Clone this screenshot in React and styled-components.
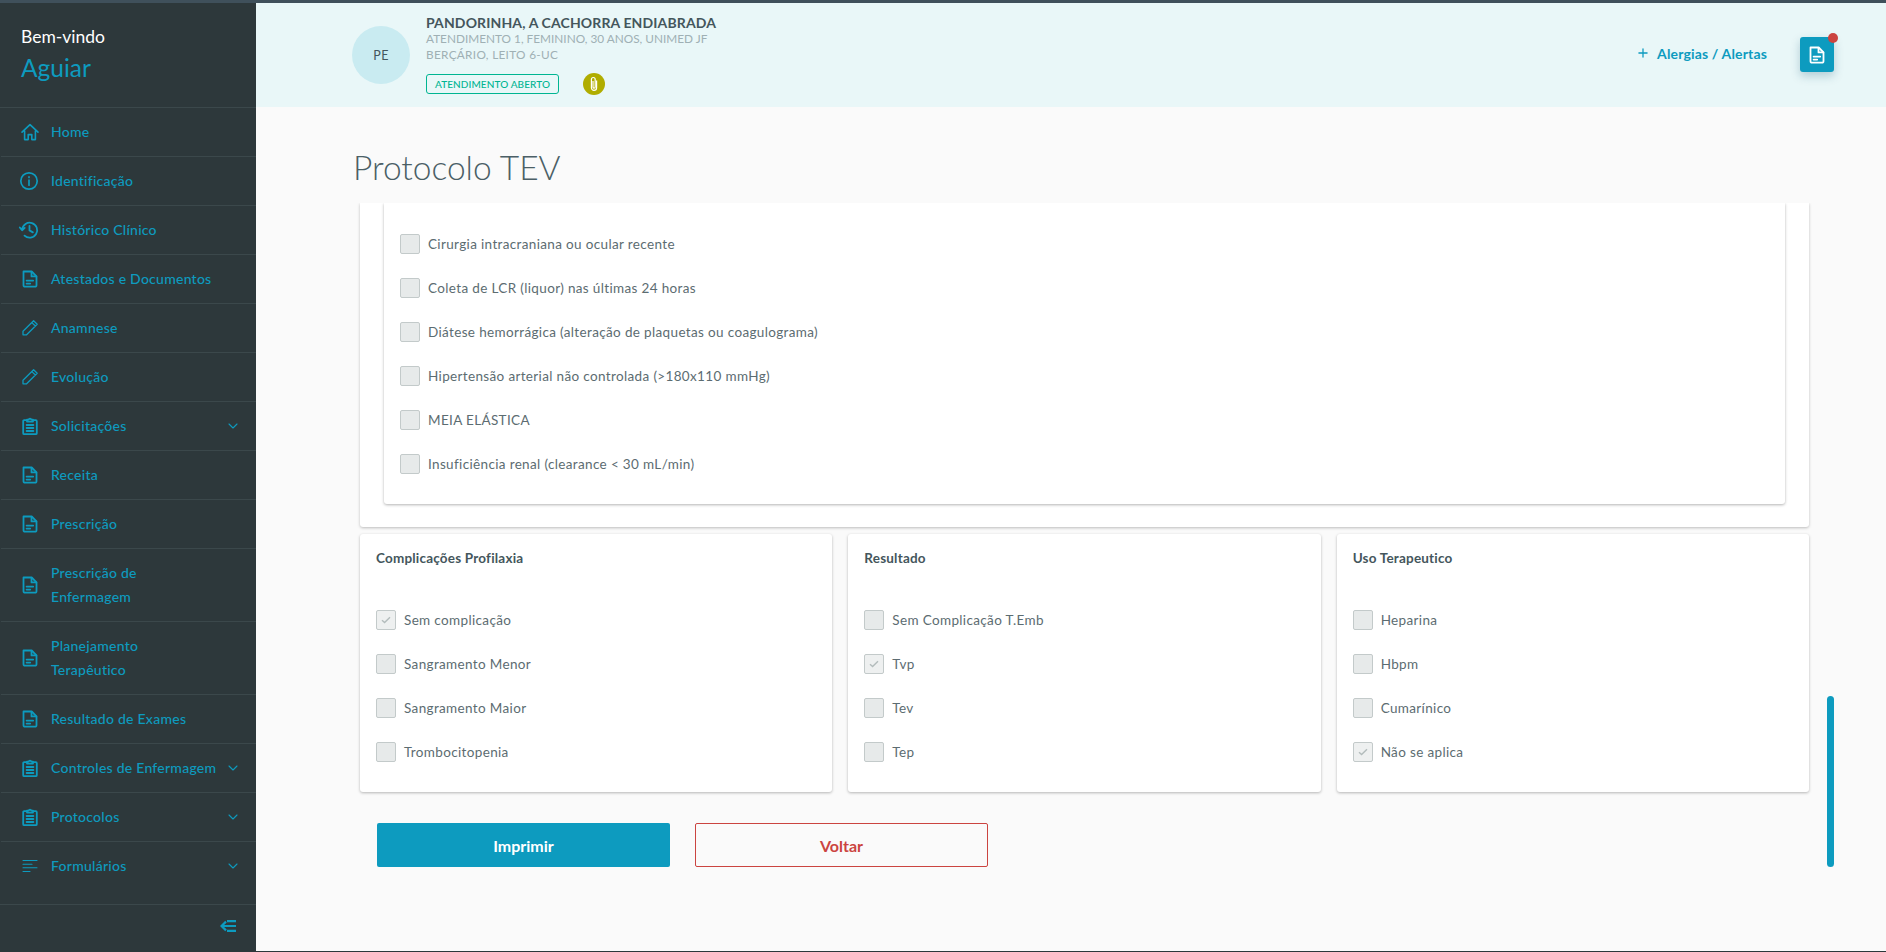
import React from 'react'
import styled, { createGlobalStyle } from 'styled-components'
import { ChevronDown, Plus } from 'lucide-react'

const BLUE = '#0d9bbf'
const DARK = '#2d383b'
const INK = '#44565c'

const GlobalStyle = createGlobalStyle`
  * { box-sizing: border-box; }
  html, body { margin: 0; height: 100%; }
  body { font-family: Lato, "Open Sans", sans-serif; background: #fafafa; overflow: hidden; }
`

const Page = styled.div`
  display: flex;
  flex-direction: column;
  height: 952px;
  border-top: 3px solid #3f505b;
  border-bottom: 1px solid ${DARK};
`

const Body = styled.div`
  display: flex;
  flex: 1;
  min-height: 0;
  position: relative;
`

const Sidebar = styled.aside`
  background: ${DARK};
  display: flex;
  flex: 0 0 256px;
  flex-direction: column;
  margin-bottom: -1px;
`

const Welcome = styled.div`
  border-bottom: 1px solid #3b484b;
  height: 105px;
  padding: 22px 0 0 21px;
`

const Hello = styled.div`
  color: #fff;
  font-size: 17.5px;
  line-height: 24px;
`

const UserName = styled.div`
  color: ${BLUE};
  font-size: 24.5px;
  line-height: 34px;
  margin-top: 2px;
`

const Nav = styled.nav`
  flex: 1;
`

const NavItem = styled.a`
  align-items: center;
  border-bottom: ${props => (props.$last ? 'none' : '1px solid #3b484b')};
  color: ${BLUE};
  display: flex;
  font-size: 14px;
  font-weight: 500;
  letter-spacing: 0.25px;
  line-height: 24px;
  margin-left: 1px;
  padding: 12px 15px 12px 20px;
`

const NavIcon = styled.span`
  display: flex;
  flex: 0 0 30px;
`

const NavLabel = styled.span`
  flex: 1;
  max-width: ${props => (props.$narrow ? '110px' : 'none')};
`

const SidebarFoot = styled.div`
  align-items: center;
  border-top: 1px solid #3b484b;
  display: flex;
  height: 48px;
  justify-content: flex-end;
  padding: 0 20px 6px 0;
`

const Main = styled.main`
  display: flex;
  flex: 1;
  flex-direction: column;
  min-width: 0;
`

const PatientBar = styled.header`
  align-items: center;
  background: #e9f7f8;
  display: flex;
  flex: 0 0 104px;
  padding: 0 52px 0 96px;
`

const Avatar = styled.div`
  align-items: center;
  background: #c9ebf1;
  border-radius: 50%;
  color: ${INK};
  display: flex;
  font-size: 12.5px;
  height: 58px;
  justify-content: center;
  letter-spacing: 0.4px;
  width: 58px;
`

const Patient = styled.div`
  flex: 1;
  margin-left: 16px;
`

const PatientName = styled.div`
  color: ${INK};
  font-size: 14px;
  font-weight: 700;
  letter-spacing: 0.13px;
  line-height: 16px;
`

const PatientLine = styled.div`
  color: #9fb0b4;
  font-size: 11.8px;
  letter-spacing: ${props => (props.$wide ? '0.3px' : '0')};
  line-height: 16px;
`

const Status = styled.div`
  align-items: center;
  display: flex;
  gap: 24px;
  margin-top: 10px;
`

const Badge = styled.span`
  border: 1px solid #00b592;
  border-radius: 3px;
  color: #00b592;
  font-size: 10px;
  font-weight: 500;
  height: 20px;
  letter-spacing: 0.1px;
  line-height: 18px;
  text-align: center;
  width: 133px;
`

const ClipDot = styled.span`
  align-items: center;
  background: #b0ad00;
  border-radius: 50%;
  display: flex;
  height: 22px;
  justify-content: center;
  width: 22px;
`

const AlertLink = styled.a`
  align-items: center;
  color: ${BLUE};
  display: flex;
  font-size: 14px;
  font-weight: 700;
  gap: 7px;
  letter-spacing: 0.15px;
  margin: 0 33px 4px 0;
`

const DocButton = styled.button`
  align-items: center;
  background: ${BLUE};
  border: 0;
  border-radius: 3px;
  box-shadow: 0 4px 10px rgba(13, 80, 110, 0.25);
  display: flex;
  height: 35px;
  justify-content: center;
  margin-bottom: 1px;
  padding: 0;
  position: relative;
  width: 34px;
`

const RedDot = styled.span`
  background: #cb4440;
  border-radius: 50%;
  height: 10px;
  position: absolute;
  right: -4px;
  top: -4px;
  width: 10px;
`

const Title = styled.h1`
  color: #4b5f66;
  flex: 0 0 96px;
  font-size: 33.5px;
  font-weight: 300;
  line-height: 40px;
  margin: 0;
  padding: 40px 0 0 97px;
`

const Content = styled.div`
  flex: 1;
  min-height: 0;
  overflow: hidden;
  padding: 0 77px 0 104px;
`

const OuterCard = styled.section`
  background: #fff;
  border-radius: 0 0 3px 3px;
  box-shadow: 0 1px 3px rgba(0, 0, 0, 0.25);
  padding: 0 24px 23px 24px;
`

const InnerCard = styled.div`
  background: #fff;
  border-radius: 0 0 3px 3px;
  box-shadow: 0 1px 3px rgba(0, 0, 0, 0.3);
  padding: 31px 16px 30px;
`

const Cards = styled.div`
  display: grid;
  gap: 16px;
  grid-template-columns: repeat(3, 1fr);
  margin-top: 7px;
`

const Card = styled.section`
  background: #fff;
  border-radius: 3px;
  box-shadow: 0 1px 3px rgba(0, 0, 0, 0.28);
  height: 258px;
  padding: 14px 16px 0;
`

const CardTitle = styled.h3`
  color: ${INK};
  font-size: 13.5px;
  font-weight: 700;
  letter-spacing: 0.2px;
  line-height: 20px;
  margin: 0 0 42px;
`

const Checks = styled.div`
  display: flex;
  flex-direction: column;
  gap: 24px;
`

const Check = styled.label`
  align-items: center;
  color: #5c6c71;
  display: flex;
  font-size: 13.5px;
  gap: 8px;
  height: 20px;
  letter-spacing: 0.35px;
`

const Box = styled.span`
  align-items: center;
  background: ${props => (props.$on ? '#eef0f0' : '#e7eaea')};
  border: 1px solid #c3caca;
  border-radius: 2px;
  display: flex;
  flex: 0 0 20px;
  height: 20px;
  justify-content: center;
`

const Actions = styled.div`
  display: flex;
  gap: 25px;
  margin-top: 31px;
  padding-left: 17px;
`

const Action = styled.button`
  background: ${props => (props.$outline ? 'transparent' : BLUE)};
  border: ${props => (props.$outline ? '1px solid #cb4440' : '0')};
  border-radius: 2px;
  color: ${props => (props.$outline ? '#cb4440' : '#fff')};
  font-family: inherit;
  font-size: 16px;
  font-weight: 700;
  height: 44px;
  width: 293px;
`

const ScrollThumb = styled.div`
  background: ${BLUE};
  border-radius: 4px;
  height: 171px;
  position: absolute;
  right: 52px;
  top: 693px;
  width: 7px;
`

const Svg = ({ size = 18, width = 1.8, children, color = BLUE }) => (
  <svg
    width={size}
    height={size}
    viewBox="0 0 18 18"
    fill="none"
    stroke={color}
    strokeWidth={width}
    strokeLinejoin="round"
    strokeLinecap="round"
    overflow="visible"
  >
    {children}
  </svg>
)

const HomeIcon = () => (
  <Svg width={1.6}>
    <path d="M1 9.2 9 1.6l8 7.6M3.6 8v8.6h3.6v-5h3.6v5h3.6V8" />
  </Svg>
)

const InfoIcon = () => (
  <Svg width={1.7}>
    <circle cx="8" cy="9" r="8.2" />
    <path d="M8 8.2v5M8 4.8v.6" />
  </Svg>
)

const HistoryIcon = () => (
  <Svg width={1.8}>
    <path d="M1.2 8.5A7.5 7.5 0 1 1 3.5 14.6M-1.2 6.5l2.3 2.8 2.6-2.4M8.5 4.8v4.6l3.4 2" />
  </Svg>
)

const DocIcon = ({ color }) => (
  <Svg color={color}>
    <path d="M2.5 1.5h8.2l4.8 4.8v9a1.4 1.4 0 0 1-1.4 1.4H3.9a1.4 1.4 0 0 1-1.4-1.4z" />
    <path d="M10.5 1.8v4.6h4.8M5.6 10.6h6.6M5.6 13.6h3.6" />
  </Svg>
)

const PencilIcon = () => (
  <Svg width={1.3}>
    <path d="M2 12.2 12.6 1.8l3.6 3.4L5.6 15.8H2zM10.8 3.6l3.6 3.4" />
  </Svg>
)

const ClipboardIcon = () => (
  <Svg>
    <path d="M5.6 3.2H3.2a1 1 0 0 0-1 1v12a1 1 0 0 0 1 1h11.6a1 1 0 0 0 1-1v-12a1 1 0 0 0-1-1h-2.4" />
    <path d="M6 4.6V2.6h1.6a1.5 1.5 0 0 1 2.8 0H12v2zM5.6 8h6.8M5.6 11h6.8M5.6 14h6.8" />
  </Svg>
)

const LinesIcon = () => (
  <Svg width={1.1}>
    <path d="M2 3.5h14M2 7.2h9M2 10.8h14M2 14.5h7" />
  </Svg>
)

const CollapseIcon = () => (
  <svg width="16" height="12" viewBox="0 0 16 12" fill="none" stroke={BLUE} strokeWidth="2.2">
    <path d="M7 1.1h9M2 6h14M7 10.9h9M6 1.6 1.5 6 6 10.4" />
  </svg>
)

const ClipIcon = () => (
  <svg width="14" height="16" viewBox="0 0 14 16" fill="none" stroke="#fff" strokeWidth="1.2">
    <path d="M9.6 4.4v7.4a2.6 2.6 0 0 1-5.2 0V3.4a1.9 1.9 0 0 1 3.8 0v7.6a1.1 1.1 0 0 1-2.2 0V5" />
  </svg>
)

const CheckMark = () => (
  <svg width="10" height="8" viewBox="0 0 10 8" fill="none" stroke="#b3bcbc" strokeWidth="1.4">
    <path d="M1 4.2 3.6 6.6 9 1.2" />
  </svg>
)

const menu = [
  { label: 'Home', icon: <HomeIcon /> },
  { label: 'Identificação', icon: <InfoIcon /> },
  { label: 'Histórico Clínico', icon: <HistoryIcon /> },
  { label: 'Atestados e Documentos', icon: <DocIcon /> },
  { label: 'Anamnese', icon: <PencilIcon /> },
  { label: 'Evolução', icon: <PencilIcon /> },
  { label: 'Solicitações', icon: <ClipboardIcon />, more: true },
  { label: 'Receita', icon: <DocIcon /> },
  { label: 'Prescrição', icon: <DocIcon /> },
  { label: 'Prescrição de Enfermagem', icon: <DocIcon />, narrow: true },
  { label: 'Planejamento Terapêutico', icon: <DocIcon />, narrow: true },
  { label: 'Resultado de Exames', icon: <DocIcon /> },
  { label: 'Controles de Enfermagem', icon: <ClipboardIcon />, more: true },
  { label: 'Protocolos', icon: <ClipboardIcon />, more: true },
  { label: 'Formulários', icon: <LinesIcon />, more: true, last: true }
]

const risks = [
  'Cirurgia intracraniana ou ocular recente',
  'Coleta de LCR (liquor) nas últimas 24 horas',
  'Diátese hemorrágica (alteração de plaquetas ou coagulograma)',
  'Hipertensão arterial não controlada (>180x110 mmHg)',
  'MEIA ELÁSTICA',
  'Insuficiência renal (clearance < 30 mL/min)'
]

const groups = [
  {
    title: 'Complicações Profilaxia',
    items: ['Sem complicação', 'Sangramento Menor', 'Sangramento Maior', 'Trombocitopenia'],
    checked: 'Sem complicação'
  },
  {
    title: 'Resultado',
    items: ['Sem Complicação T.Emb', 'Tvp', 'Tev', 'Tep'],
    checked: 'Tvp'
  },
  {
    title: 'Uso Terapeutico',
    items: ['Heparina', 'Hbpm', 'Cumarínico', 'Não se aplica'],
    checked: 'Não se aplica'
  }
]

const CheckRow = ({ label, on }) => (
  <Check>
    <Box $on={on}>{on && <CheckMark />}</Box>
    {label}
  </Check>
)

export default function App() {
  return (
    <Page>
      <GlobalStyle />
      <Body>
        <Sidebar>
          <Welcome>
            <Hello>Bem-vindo</Hello>
            <UserName>Aguiar</UserName>
          </Welcome>
          <Nav>
            {menu.map(item => (
              <NavItem key={item.label} $last={item.last}>
                <NavIcon>{item.icon}</NavIcon>
                <NavLabel $narrow={item.narrow}>{item.label}</NavLabel>
                {item.more && <ChevronDown size={16} color={BLUE} strokeWidth={1.6} />}
              </NavItem>
            ))}
          </Nav>
          <SidebarFoot>
            <CollapseIcon />
          </SidebarFoot>
        </Sidebar>
        <Main>
          <PatientBar>
            <Avatar>PE</Avatar>
            <Patient>
              <PatientName>PANDORINHA, A CACHORRA ENDIABRADA</PatientName>
              <PatientLine>ATENDIMENTO 1, FEMININO, 30 ANOS, UNIMED JF</PatientLine>
              <PatientLine $wide>BERÇÁRIO, LEITO 6-UC</PatientLine>
              <Status>
                <Badge>ATENDIMENTO ABERTO</Badge>
                <ClipDot>
                  <ClipIcon />
                </ClipDot>
              </Status>
            </Patient>
            <AlertLink>
              <Plus size={14} strokeWidth={2.2} />
              Alergias / Alertas
            </AlertLink>
            <DocButton>
              <DocIcon color="#fff" />
              <RedDot />
            </DocButton>
          </PatientBar>
          <Title>Protocolo TEV</Title>
          <Content>
            <OuterCard>
              <InnerCard>
                <Checks>
                  {risks.map(risk => (
                    <CheckRow key={risk} label={risk} />
                  ))}
                </Checks>
              </InnerCard>
            </OuterCard>
            <Cards>
              {groups.map(group => (
                <Card key={group.title}>
                  <CardTitle>{group.title}</CardTitle>
                  <Checks>
                    {group.items.map(item => (
                      <CheckRow key={item} label={item} on={item === group.checked} />
                    ))}
                  </Checks>
                </Card>
              ))}
            </Cards>
            <Actions>
              <Action>Imprimir</Action>
              <Action $outline>Voltar</Action>
            </Actions>
          </Content>
        </Main>
        <ScrollThumb />
      </Body>
    </Page>
  )
}
